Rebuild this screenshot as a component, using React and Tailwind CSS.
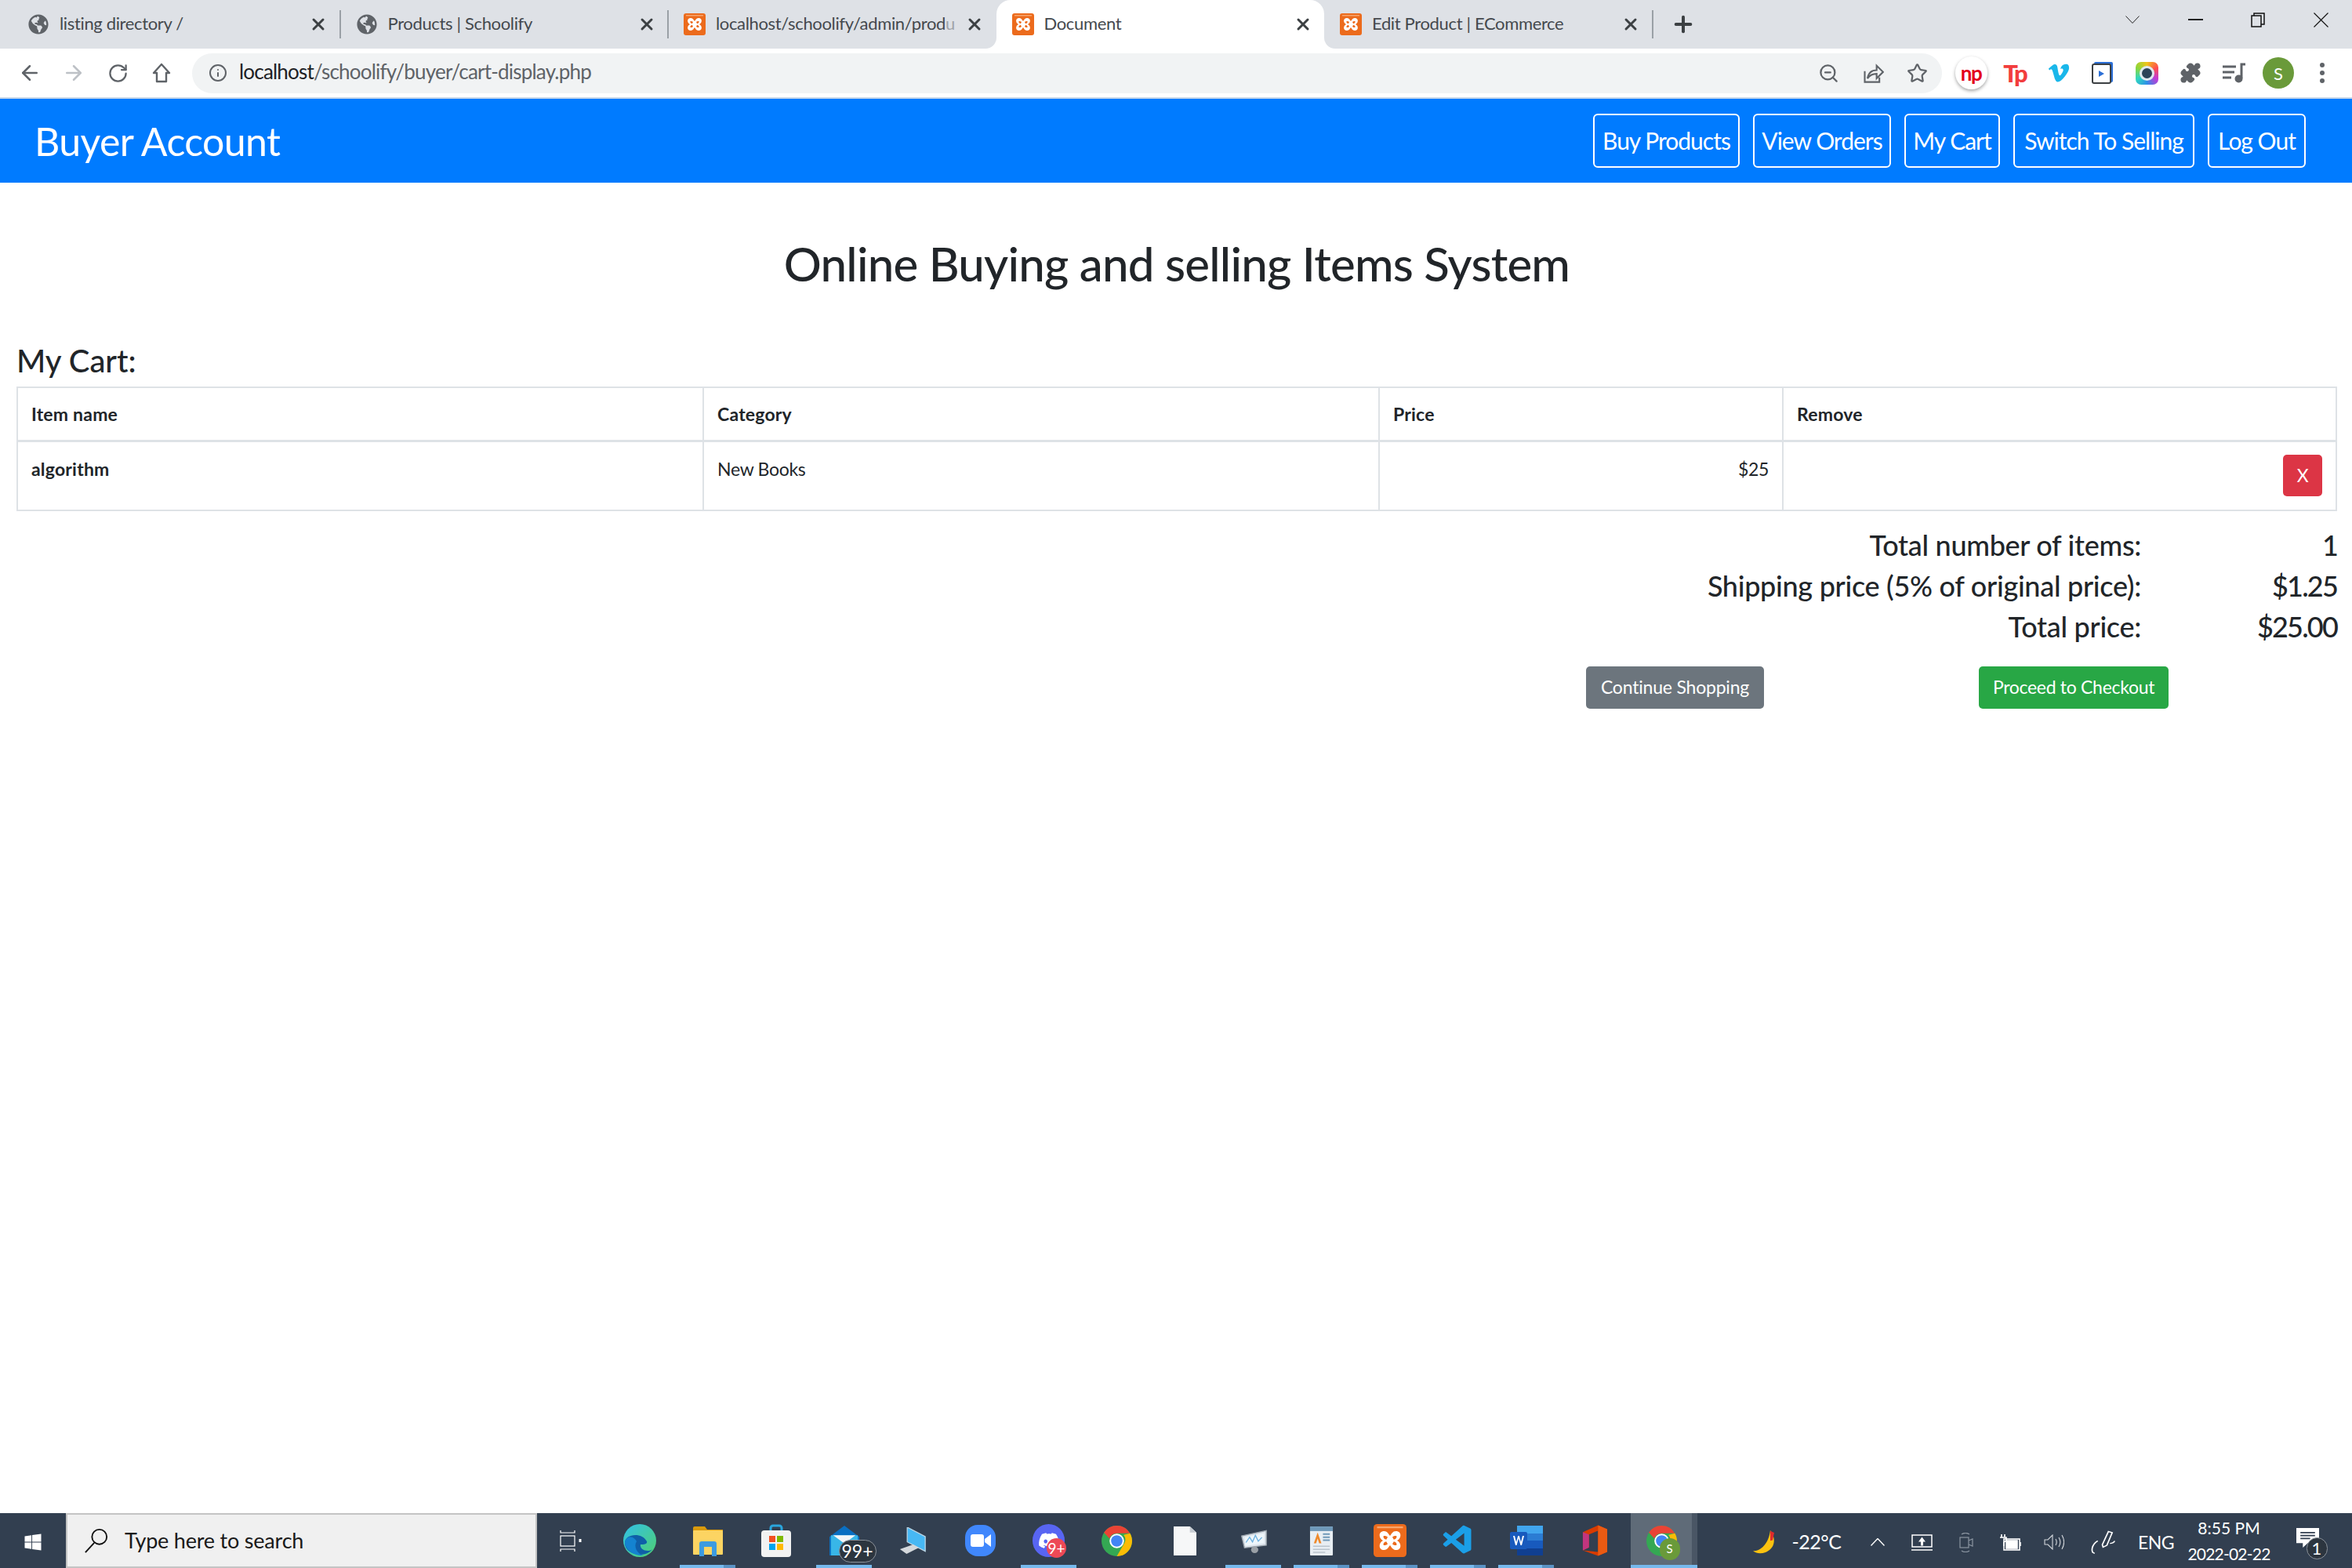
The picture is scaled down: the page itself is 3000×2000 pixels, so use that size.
import { ArrowLeft, ArrowRight, RotateCw, Info, ZoomOut, Star, Puzzle, X, Plus } from 'lucide-react';
import { FaGlobeAmericas, FaVimeoV, FaDiscord, FaWindows } from 'react-icons/fa';
import { VscVscode } from 'react-icons/vsc';

function XamppIcon({ size = 28 }) {
  return (
    <svg width={size} height={size} viewBox="0 0 28 28">
      <rect x="0" y="0" width="28" height="28" rx="3" fill="#ec6b1c" />
      <rect x="3" y="2" width="22" height="1.5" fill="#f7a66e" />
      <path d="M9 6c-5 0-5 6-1 8-4 2-4 8 1 8 3 0 4-3 5-4 1 1 2 4 5 4 5 0 5-6 1-8 4-2 4-8-1-8-3 0-4 3-5 4-1-1-2-4-5-4z" fill="#fff" />
      <path d="M9 10c-1 0-1 2 1 3h1l1-2c-1-1-2-1-3-1zM19 10c1 0 1 2-1 3h-1l-1-2c1-1 2-1 2-1zM9 18c-1 0-1-2 1-3h1l1 2c-1 1-2 1-3 1zM19 18c1 0 1-2-1-3h-1l-1 2c1 1 2 1 2 1z" fill="#ec6b1c" />
    </svg>
  );
}

function ChromeIcon({ size = 39 }) {
  return (
    <svg width={size} height={size} viewBox="0 0 40 40">
      <circle cx="20" cy="20" r="20" fill="#34a853" />
      <path d="M20 0a20 20 0 0 1 17.3 10H20a10 10 0 0 0-9.5 7L3.2 9A20 20 0 0 1 20 0z" fill="#ea4335" />
      <path d="M37.3 10A20 20 0 0 1 20 40l8.6-15A10 10 0 0 0 29 12z" fill="#fbbc05" />
      <circle cx="20" cy="20" r="9.5" fill="#fff" />
      <circle cx="20" cy="20" r="7.5" fill="#4285f4" />
    </svg>
  );
}

const tabs = [
  { title: 'listing directory /', icon: 'globe' },
  { title: 'Products | Schoolify', icon: 'globe' },
  { title: <>localhost/schoolify/admin/prod<span className="opacity-40">u</span></>, icon: 'xampp' },
  { title: 'Document', icon: 'xampp', active: true },
  { title: 'Edit Product | ECommerce', icon: 'xampp' },
];

function Tab({ tab, sep }) {
  return (
    <div className={`relative flex h-full w-[418.5px] shrink-0 items-center pl-[20px] ${tab.active ? 'rounded-t-[18px] bg-white' : ''}`}>
      {tab.active && (
        <>
          <div className="absolute bottom-0 left-[-14px] h-[14px] w-[14px] bg-white">
            <div className="h-full w-full rounded-br-[14px] bg-[#dee1e6]" />
          </div>
          <div className="absolute bottom-0 right-[-14px] h-[14px] w-[14px] bg-white">
            <div className="h-full w-full rounded-bl-[14px] bg-[#dee1e6]" />
          </div>
        </>
      )}
      <div className="flex w-[28px] shrink-0 justify-center">
        {tab.icon === 'globe' ? <FaGlobeAmericas size={26} color="#5f6368" /> : <XamppIcon />}
      </div>
      <span className="mb-[3px] ml-[13px] w-[312px] text-[22px] tracking-[-0.35px] whitespace-nowrap text-[#45494e]">{tab.title}</span>
      <X size={24} strokeWidth={3} className="ml-[6px] shrink-0 text-[#3c4043]" />
      {sep && <div className="absolute right-[-1px] h-[36px] w-[2px] bg-[#9aa0a6]" />}
    </div>
  );
}

function TabBar() {
  return (
    <div className="relative flex h-[62px] items-start bg-[#dee1e6] pl-[15px]">
      <div className="flex h-full items-center">
        {tabs.map((tab, i) => <Tab key={i} tab={tab} sep={i === 0 || i === 1 || i === 4} />)}
        <Plus size={32} strokeWidth={3} className="ml-[23px] text-[#3c4043]" />
      </div>
      <div className="ml-auto flex h-[50px] items-center">
        <div className="flex w-[80px] justify-center">
          <svg width="18" height="10" viewBox="0 0 18 10" fill="none" stroke="#222" strokeWidth="1"><path d="M0.5 0.5L9 9.5 17.5 0.5" /></svg>
        </div>
        <div className="flex w-[80px] justify-center"><div className="h-[2px] w-[19px] bg-[#222]" /></div>
        <div className="flex w-[80px] justify-center">
          <svg width="18" height="19" viewBox="0 0 18 19" fill="none" stroke="#111" strokeWidth="1.5">
            <rect x="1" y="4" width="12" height="14" />
            <path d="M4 4V1h13v14h-4" />
          </svg>
        </div>
        <div className="flex w-[80px] justify-center">
          <svg width="19" height="19" viewBox="0 0 19 19" fill="none" stroke="#111" strokeWidth="1.1"><path d="M0.5 0.5l18 18M18.5 0.5l-18 18" /></svg>
        </div>
      </div>
    </div>
  );
}

function ToolBar() {
  return (
    <div className="flex h-[64px] items-center border-b-2 border-[#c7d7ea] bg-white">
      <div className="flex w-[245px] shrink-0 items-center pl-[10px] text-[#5f6368]">
        <div className="flex w-[56px] justify-center"><ArrowLeft size={30} strokeWidth={2} /></div>
        <div className="flex w-[56px] justify-center"><ArrowRight size={30} strokeWidth={2} className="text-[#bdc1c6]" /></div>
        <div className="flex w-[56px] justify-center"><RotateCw size={27} strokeWidth={2} /></div>
        <div className="flex w-[56px] justify-center">
          <svg width="24" height="26" viewBox="0 0 24 26" fill="none" stroke="#5f6368" strokeWidth="2.4">
            <path d="M12 2L2 13h4v11h12V13h4z" strokeLinejoin="round" />
          </svg>
        </div>
      </div>
      <div className="flex h-[51px] w-[2232px] shrink-0 items-center rounded-full bg-[#f1f3f4] pr-[18px] pl-[21px] text-[#5f6368]">
        <Info size={24} strokeWidth={2} />
        <span className="mb-[3px] ml-[15px] text-[26px] tracking-[-0.8px] text-[#5f6368]"><span className="text-[#202124]">localhost</span>/schoolify/buyer/cart-display.php</span>
        <div className="ml-auto flex items-center gap-[29px]">
          <ZoomOut size={27} strokeWidth={2} />
          <svg width="28" height="28" viewBox="0 0 24 24" fill="none" stroke="#5f6368" strokeWidth="1.8">
            <path d="M3 10v12h16v-5" />
            <path d="M6 18c1-6 5-9 10-9V4l7 7-7 7v-5c-4 0-7 1-10 5z" />
          </svg>
          <Star size={27} strokeWidth={2} />
        </div>
      </div>
      <div className="flex flex-1 items-center pl-[9px] text-[#5f6368]">
        <div className="flex w-[56px] justify-center">
          <div className="flex h-[42px] w-[41px] items-center justify-center rounded-full bg-white text-[26px] leading-none font-bold tracking-[-1.5px] text-[#e3001b] shadow-[0_2px_4px_rgba(0,0,0,0.35)]">np</div>
        </div>
        <div className="flex w-[56px] justify-center text-[31px] leading-none font-black tracking-[-2px] text-[#f23d3d]">Tp</div>
        <div className="flex w-[56px] justify-center"><FaVimeoV size={30} color="#1ab7ea" /></div>
        <div className="flex w-[56px] justify-center">
          <svg width="28" height="28" viewBox="0 0 28 28">
            <rect x="3" y="0" width="24" height="26" rx="2" fill="#2b6fd6" />
            <rect x="1" y="3" width="23" height="24" rx="2" fill="#fff" stroke="#3c4043" strokeWidth="2" />
            <path d="M9 11l7 4-7 4z" fill="#2b6fd6" />
          </svg>
        </div>
        <div className="flex w-[56px] justify-center">
          <div className="flex h-[29px] w-[29px] items-center justify-center rounded-[7px] bg-[conic-gradient(#f0c419,#ff4d4d,#c03ad6,#2d8fe8,#2fd6c0,#8ed63a,#f0c419)]">
            <div className="h-[19px] w-[19px] rounded-full border-[3px] border-[#dfe8ee] bg-[#2c4258]" />
          </div>
        </div>
        <div className="flex w-[56px] justify-center"><Puzzle size={28} fill="#5f6368" strokeWidth={1.5} /></div>
        <div className="flex w-[56px] justify-center">
          <svg width="30" height="26" viewBox="0 0 30 26" fill="none" stroke="#5f6368" strokeWidth="3">
            <path d="M0 5h17M0 12h15M0 19h11" />
            <path d="M24 20V2h5" />
            <circle cx="20.5" cy="20.5" r="3.5" fill="#5f6368" />
          </svg>
        </div>
        <div className="flex w-[56px] justify-center">
          <div className="flex h-[40px] w-[40px] items-center justify-center rounded-full bg-[#6a9a3a] text-[22px] text-white">S</div>
        </div>
        <div className="flex w-[56px] flex-col items-center gap-[4px]">
          <div className="h-[6px] w-[6px] rounded-full bg-[#5f6368]" />
          <div className="h-[6px] w-[6px] rounded-full bg-[#5f6368]" />
          <div className="h-[6px] w-[6px] rounded-full bg-[#5f6368]" />
        </div>
      </div>
    </div>
  );
}

function NavBar() {
  const links = [
    { label: 'Buy Products', w: 'w-[187px]' },
    { label: 'View Orders', w: 'w-[176px]' },
    { label: 'My Cart', w: 'w-[122px]' },
    { label: 'Switch To Selling', w: 'w-[231px]' },
    { label: 'Log Out', w: 'w-[125px]' },
  ];
  return (
    <nav className="flex h-[107px] items-center justify-between bg-[#007bff] pr-[59px] pl-[44px] text-white">
      <div className="text-[50px] leading-none tracking-[-0.6px]">Buyer Account</div>
      <div className="flex gap-[17px]">
        {links.map(l => (
          <div key={l.label} className={`flex h-[69px] items-center justify-center rounded-[6px] border-2 border-white text-[30px] tracking-[-1px] whitespace-nowrap ${l.w}`}>{l.label}</div>
        ))}
      </div>
    </nav>
  );
}

function CartTable() {
  return (
    <table className="w-full table-fixed border-collapse text-[23px] tracking-[-0.3px] text-[#212529]">
      <colgroup>
        <col className="w-[875px]" />
        <col className="w-[862px]" />
        <col className="w-[515px]" />
        <col />
      </colgroup>
      <thead>
        <tr className="h-[68px] border-b-[3px] border-[#dee2e6] tracking-[0.2px]">
          <th className="border-2 border-[#dee2e6] px-[17px] text-left font-bold">Item name</th>
          <th className="border-2 border-[#dee2e6] px-[17px] text-left font-bold">Category</th>
          <th className="border-2 border-[#dee2e6] px-[17px] text-left font-bold">Price</th>
          <th className="border-2 border-[#dee2e6] px-[17px] text-left font-bold">Remove</th>
        </tr>
      </thead>
      <tbody>
        <tr className="h-[87px]">
          <td className="border-2 border-[#dee2e6] px-[17px] pt-[20px] pb-[38px] align-top leading-[28px] font-bold tracking-[0.2px]">algorithm</td>
          <td className="border-2 border-[#dee2e6] px-[17px] pt-[20px] pb-[38px] align-top leading-[28px]">New Books</td>
          <td className="border-2 border-[#dee2e6] px-[17px] pt-[20px] pb-[38px] text-right align-top leading-[28px]">$25</td>
          <td className="border-2 border-[#dee2e6] px-[17px] py-0 text-right align-middle">
            <button className="h-[53px] w-[50px] rounded-[5px] bg-[#dc3545] text-[23px] text-white">X</button>
          </td>
        </tr>
      </tbody>
    </table>
  );
}

function Totals() {
  const rows = [
    ['Total number of items:', '1'],
    ['Shipping price (5% of original price):', '$1.25'],
    ['Total price:', '$25.00'],
  ];
  return (
    <div className="mt-[17px] text-[36px] leading-[52px] font-medium tracking-[-0.3px] text-[#212529]">
      {rows.map(([label, val]) => (
        <div key={label} className="flex justify-end">
          <span>{label}</span>
          <span className="w-[250px] text-right tracking-[-1.8px]">{val}</span>
        </div>
      ))}
    </div>
  );
}

function TaskIcon({ children, bar, split, active }) {
  return (
    <div className={`relative flex h-full shrink-0 flex-col items-center ${active ? 'ml-[3px] w-[78px] bg-[#5f6b78]' : 'w-[87px]'}`}>
      <div className="flex w-full flex-1 items-center justify-center pt-[4px]">{children}</div>
      <div className={`flex h-[4px] ${active ? 'w-full' : 'w-[71px]'}`}>
        {bar && <div className="h-full flex-1 bg-[#76b9ed]" />}
        {split && <div className="h-full w-[15px] bg-[#5a92c4]" />}
      </div>
    </div>
  );
}

function TrayCell({ w, children }) {
  return <div className={`flex h-full shrink-0 items-center justify-center pt-[4px] ${w}`}>{children}</div>;
}

function TaskBar() {
  return (
    <div className="flex h-[70px] items-stretch bg-[#323f50] text-white">
      <div className="flex w-[84px] shrink-0 items-center justify-center pt-[4px]"><FaWindows size={24} /></div>
      <div className="flex w-[601px] shrink-0 items-center border-2 border-[#c4c4c4] bg-[#f0f0f0] pl-[20px] text-[#1a1a1a]">
        <svg width="34" height="32" viewBox="0 0 34 34" fill="none" stroke="#111" strokeWidth="2">
          <circle cx="21" cy="12" r="10" />
          <path d="M14 20L2 33" />
        </svg>
        <span className="ml-[19px] text-[27px] tracking-[-0.2px]">Type here to search</span>
      </div>
      <TaskIcon>
        <svg width="29" height="27" viewBox="0 0 29 27" fill="none" stroke="#fff" strokeWidth="1.2">
          <path d="M1 0v3h18V0M1 27v-3h18v3" />
          <rect x="1" y="7" width="18" height="13" />
          <path d="M26 11v4" strokeWidth="3" />
        </svg>
      </TaskIcon>
      <TaskIcon>
        <svg width="42" height="42" viewBox="0 0 42 42">
          <defs>
            <linearGradient id="edgeA" x1="0" y1="0" x2="1" y2="1"><stop offset="0" stopColor="#31c0e8" /><stop offset="1" stopColor="#50d070" /></linearGradient>
          </defs>
          <circle cx="21" cy="21" r="21" fill="url(#edgeA)" />
          <path d="M2 24C2 12 24 10 30 22c1 3-3 4-8 4-1 4 3 8 9 8 2 0 4 0 6-2-8 12-35 8-35-8z" fill="#0f5fa8" />
          <path d="M17 22c-4 6 0 16 9 18-13 1-24-8-24-17 2-9 12-8 15-1z" fill="#1483d0" />
        </svg>
      </TaskIcon>
      <TaskIcon bar split>
        <svg width="38" height="40" viewBox="0 0 38 40">
          <path d="M0 4a2 2 0 0 1 2-2h13l3 4h20v30H0z" fill="#d99a0c" />
          <rect x="0" y="7" width="38" height="31" rx="1" fill="#fcd462" />
          <path d="M8 40V24a3 3 0 0 1 3-3h16a3 3 0 0 1 3 3v16h-6V28H14v12z" fill="#3d9be0" />
        </svg>
      </TaskIcon>
      <TaskIcon>
        <svg width="38" height="42" viewBox="0 0 38 42">
          <path d="M12 8V5a3 3 0 0 1 3-3h8a3 3 0 0 1 3 3v3" fill="none" stroke="#2aa5dc" strokeWidth="3" />
          <rect x="0" y="8" width="38" height="34" rx="4" fill="#f2f2f2" />
          <rect x="10" y="15" width="8" height="8" fill="#f25022" />
          <rect x="20" y="15" width="8" height="8" fill="#7fba00" />
          <rect x="10" y="25" width="8" height="8" fill="#00a4ef" />
          <rect x="20" y="25" width="8" height="8" fill="#ffb900" />
        </svg>
      </TaskIcon>
      <TaskIcon bar>
        <div className="relative flex h-[38px] w-[42px] items-center justify-center">
          <svg width="42" height="38" viewBox="0 0 42 40">
            <path d="M21 0l20 15v25H1V15z" fill="#0a6fc2" />
            <path d="M3 13h36v27H3z" fill="#38b6e8" />
            <path d="M6 13h30L21 24z" fill="#f4f6f8" />
          </svg>
          <div className="absolute top-[18px] left-[14px] flex h-[29px] w-[48px] items-center justify-center rounded-full border border-[#8c939b] bg-[#2c353f] text-[23px] leading-none">99+</div>
        </div>
      </TaskIcon>
      <TaskIcon>
        <svg width="36" height="34" viewBox="0 0 38 40">
          <path d="M11 0l27 14v22L11 22z" fill="#47b8f4" stroke="#bcd6e6" strokeWidth="1.5" />
          <path d="M20 26l-20 7 10 7 18-9z" fill="#d4d8dc" />
        </svg>
      </TaskIcon>
      <TaskIcon>
        <div className="flex h-[40px] w-[39px] items-center justify-center rounded-[16px] bg-[#4087fc]">
          <svg width="26" height="18" viewBox="0 0 26 18" fill="#fff">
            <rect x="0" y="1" width="17" height="16" rx="3" />
            <path d="M18 7l8-6v16l-8-6z" />
          </svg>
        </div>
      </TaskIcon>
      <TaskIcon bar>
        <div className="relative flex h-[42px] w-[41px] items-center justify-center rounded-full bg-[#5865f2]">
          <FaDiscord size={28} color="#fff" />
          <div className="absolute top-[18px] left-[18px] flex h-[25px] w-[25px] items-center justify-center rounded-full bg-[#ed4956] text-[19px] leading-none">9+</div>
        </div>
      </TaskIcon>
      <TaskIcon><ChromeIcon /></TaskIcon>
      <TaskIcon>
        <svg width="29" height="37" viewBox="0 0 28 38" preserveAspectRatio="none">
          <path d="M0 0h20l8 8v30H0z" fill="#f6f7f8" />
          <path d="M20 0l8 8h-8z" fill="#c6ccd2" />
        </svg>
      </TaskIcon>
      <TaskIcon bar>
        <svg width="37" height="32" viewBox="0 0 40 38" preserveAspectRatio="none">
          <path d="M4 12l34-8v22L8 30z" fill="#dfe6ee" stroke="#9aa4ad" strokeWidth="1.5" />
          <path d="M8 14l27-6v15L9 27z" fill="#eef6fb" />
          <path d="M10 22l5-8 4 7 4-10 4 9 5-6" fill="none" stroke="#6fb2e0" strokeWidth="1.5" />
          <circle cx="22" cy="33" r="5" fill="#9aa0a6" />
        </svg>
      </TaskIcon>
      <TaskIcon bar split>
        <svg width="31" height="37" viewBox="0 0 32 38">
          <rect x="1" y="0" width="30" height="38" rx="1" fill="#e8eef3" />
          <rect x="1" y="0" width="30" height="6" fill="#6e98b8" />
          <path d="M6 22l5-14 5 14h-3l-2-6-2 6z" fill="#ef8a2c" />
          <path d="M18 10h9M18 14h9M18 18h9" stroke="#6e98b8" strokeWidth="2" />
          <path d="M5 26h22M5 30h22M5 34h16" stroke="#b9c4cd" strokeWidth="1.5" />
        </svg>
      </TaskIcon>
      <TaskIcon bar split><XamppIcon size={42} /></TaskIcon>
      <TaskIcon bar split><VscVscode size={44} color="#1b9fe8" /></TaskIcon>
      <TaskIcon bar split>
        <svg width="42" height="38" viewBox="0 0 42 38">
          <rect x="9" y="0" width="33" height="38" rx="2" fill="#2b7cd3" />
          <rect x="9" y="0" width="33" height="10" fill="#41a5ee" />
          <rect x="9" y="19" width="33" height="10" fill="#185abd" />
          <rect x="9" y="29" width="33" height="9" fill="#103f91" />
          <rect x="0" y="8" width="22" height="22" rx="2" fill="#185abd" />
          <path d="M4 13l3 12h1.5L11 16l2.5 9H15l3-12h-2l-2 8-2.2-8h-1.6L8 21l-2-8z" fill="#fff" />
        </svg>
      </TaskIcon>
      <TaskIcon>
        <svg width="33" height="40" viewBox="0 0 34 40">
          <path d="M22 0l12 5v30l-12 5-20-7 20 2V7L10 12v17l-8 4V9z" fill="#d83b01" />
          <path d="M2 9l8 3v17l-8 4z" fill="#c2357f" />
          <path d="M22 0l12 5v30l-12 5z" fill="#ea5a12" />
        </svg>
      </TaskIcon>
      <TaskIcon bar active>
        <div className="relative">
          <ChromeIcon />
          <div className="absolute top-[16px] left-[17px] flex h-[28px] w-[26px] items-center justify-center rounded-full bg-[#6a9a3a] text-[15px]">S</div>
        </div>
      </TaskIcon>
      <div className="flex h-full w-[7px] shrink-0 flex-col justify-end bg-[#4a5665]">
        <div className="h-[4px] bg-[#76b9ed]" />
      </div>
      <div className="flex flex-1 items-stretch pl-[60px]">
        <TrayCell w="w-[54px]">
          <svg width="32" height="31" viewBox="0 0 32 40" preserveAspectRatio="none">
            <path d="M22 0c8 14 6 30-6 36-6 3-12 2-16-2 10 0 20-12 22-34z" fill="#fbc210" />
            <path d="M22 1l5 3-2 12-3 1z" fill="#e02b2b" />
          </svg>
        </TrayCell>
        <TrayCell w="w-[88px]">
          <span className="mr-[12px] text-[25px] tracking-[-0.5px] whitespace-nowrap">-22°C</span>
        </TrayCell>
        <TrayCell w="w-[56px]">
          <svg width="18" height="10" viewBox="0 0 18 10" fill="none" stroke="#fff" strokeWidth="1.4"><path d="M0.5 9.5L9 0.5l8.5 9" /></svg>
        </TrayCell>
        <TrayCell w="w-[56px]">
          <svg width="27" height="21" viewBox="0 0 27 21" fill="none" stroke="#fff" strokeWidth="1.5">
            <rect x="1" y="1" width="25" height="15" />
            <path d="M13.5 3.5l4.5 6h-3v5h-3v-5H9z" fill="#fff" stroke="none" />
            <path d="M0 20h27" />
          </svg>
        </TrayCell>
        <TrayCell w="w-[57px]">
          <svg width="18" height="25" viewBox="0 0 18 25" fill="none" stroke="#8b95a1" strokeWidth="1.2">
            <rect x="1" y="6" width="11" height="13" />
            <path d="M12 10l5-2v9l-5-2M3 2c3-2 7-2 10 0M3 23c3 2 7 2 10 0" />
          </svg>
        </TrayCell>
        <TrayCell w="w-[56px]">
          <svg width="27" height="21" viewBox="0 0 27 21" fill="none" stroke="#fff" strokeWidth="1.6">
            <rect x="5" y="6" width="20" height="14" />
            <rect x="8" y="8" width="14" height="10" fill="#fff" />
            <path d="M2 0v4M6 0v4M0 4h8v4l-3 2v5M26 10v5" />
          </svg>
        </TrayCell>
        <TrayCell w="w-[56px]">
          <svg width="26" height="20" viewBox="0 0 26 20" fill="none" stroke="#d4d8dc" strokeWidth="1.1">
            <path d="M1 7h4l6-6v18l-6-6H1z" />
            <path d="M15 6c1.5 2.5 1.5 5.500 0 8M19 4c2.500 4 2.500 8 0 12M23 1c3.500 6 3.500 12 0 18" />
          </svg>
        </TrayCell>
        <TrayCell w="w-[68px]">
          <svg width="33" height="32" viewBox="0 0 34 40" fill="none" stroke="#fff" strokeWidth="1.8" preserveAspectRatio="none">
            <path d="M16 24L24 3l5 2-7 20-5 3z" />
            <path d="M10 18C2 24 0 36 6 38M26 22c3 0 6-2 6-4" />
          </svg>
        </TrayCell>
        <TrayCell w="w-[68px]">
          <span className="text-[23px] tracking-[-0.6px]">ENG</span>
        </TrayCell>
        <div className="flex h-full w-[118px] shrink-0 flex-col items-center justify-center gap-[11px] text-[21px] leading-[22px] whitespace-nowrap">
          <span>8:55 PM</span>
          <span className="tracking-[-0.8px]">2022-02-22</span>
        </div>
        <TrayCell w="w-[82px]">
          <div className="relative h-[36px] w-[29px]">
            <svg width="29" height="25" viewBox="0 0 28 26" preserveAspectRatio="none">
              <path d="M0 0h28v20H14l-6 6v-6H0z" fill="#fff" />
              <path d="M5 6h18M5 10h18M5 14h12" stroke="#323f50" strokeWidth="1.8" />
            </svg>
            <div className="absolute top-[12px] left-[13px] flex h-[28px] w-[27px] items-center justify-center rounded-full border border-[#8c939b] bg-[#2c353f] text-[22px] leading-none">1</div>
          </div>
        </TrayCell>
      </div>
    </div>
  );
}

export default function App() {
  return (
    <div className="flex h-[2000px] w-[3000px] flex-col overflow-hidden bg-white font-[Lato,sans-serif]">
      <TabBar />
      <ToolBar />
      <NavBar />
      <main className="flex-1 pr-[19px] pl-[21px] text-[#212529]">
        <h1 className="mt-[68px] text-center text-[60px] leading-[70px] font-medium tracking-[-0.8px]">Online Buying and selling Items System</h1>
        <h2 className="mt-[68px] h-[42px] text-[40px] leading-[42px] font-medium">My Cart:</h2>
        <div className="mt-[12px]"><CartTable /></div>
        <Totals />
        <div className="mt-[25px] flex justify-end gap-[274px] pr-[215px]">
          <button className="h-[54px] w-[227px] rounded-[5px] bg-[#6c757d] text-[23px] tracking-[-0.2px] text-white">Continue Shopping</button>
          <button className="h-[54px] w-[242px] rounded-[5px] bg-[#28a745] text-[23px] tracking-[-0.3px] text-white">Proceed to Checkout</button>
        </div>
      </main>
      <TaskBar />
    </div>
  );
}
